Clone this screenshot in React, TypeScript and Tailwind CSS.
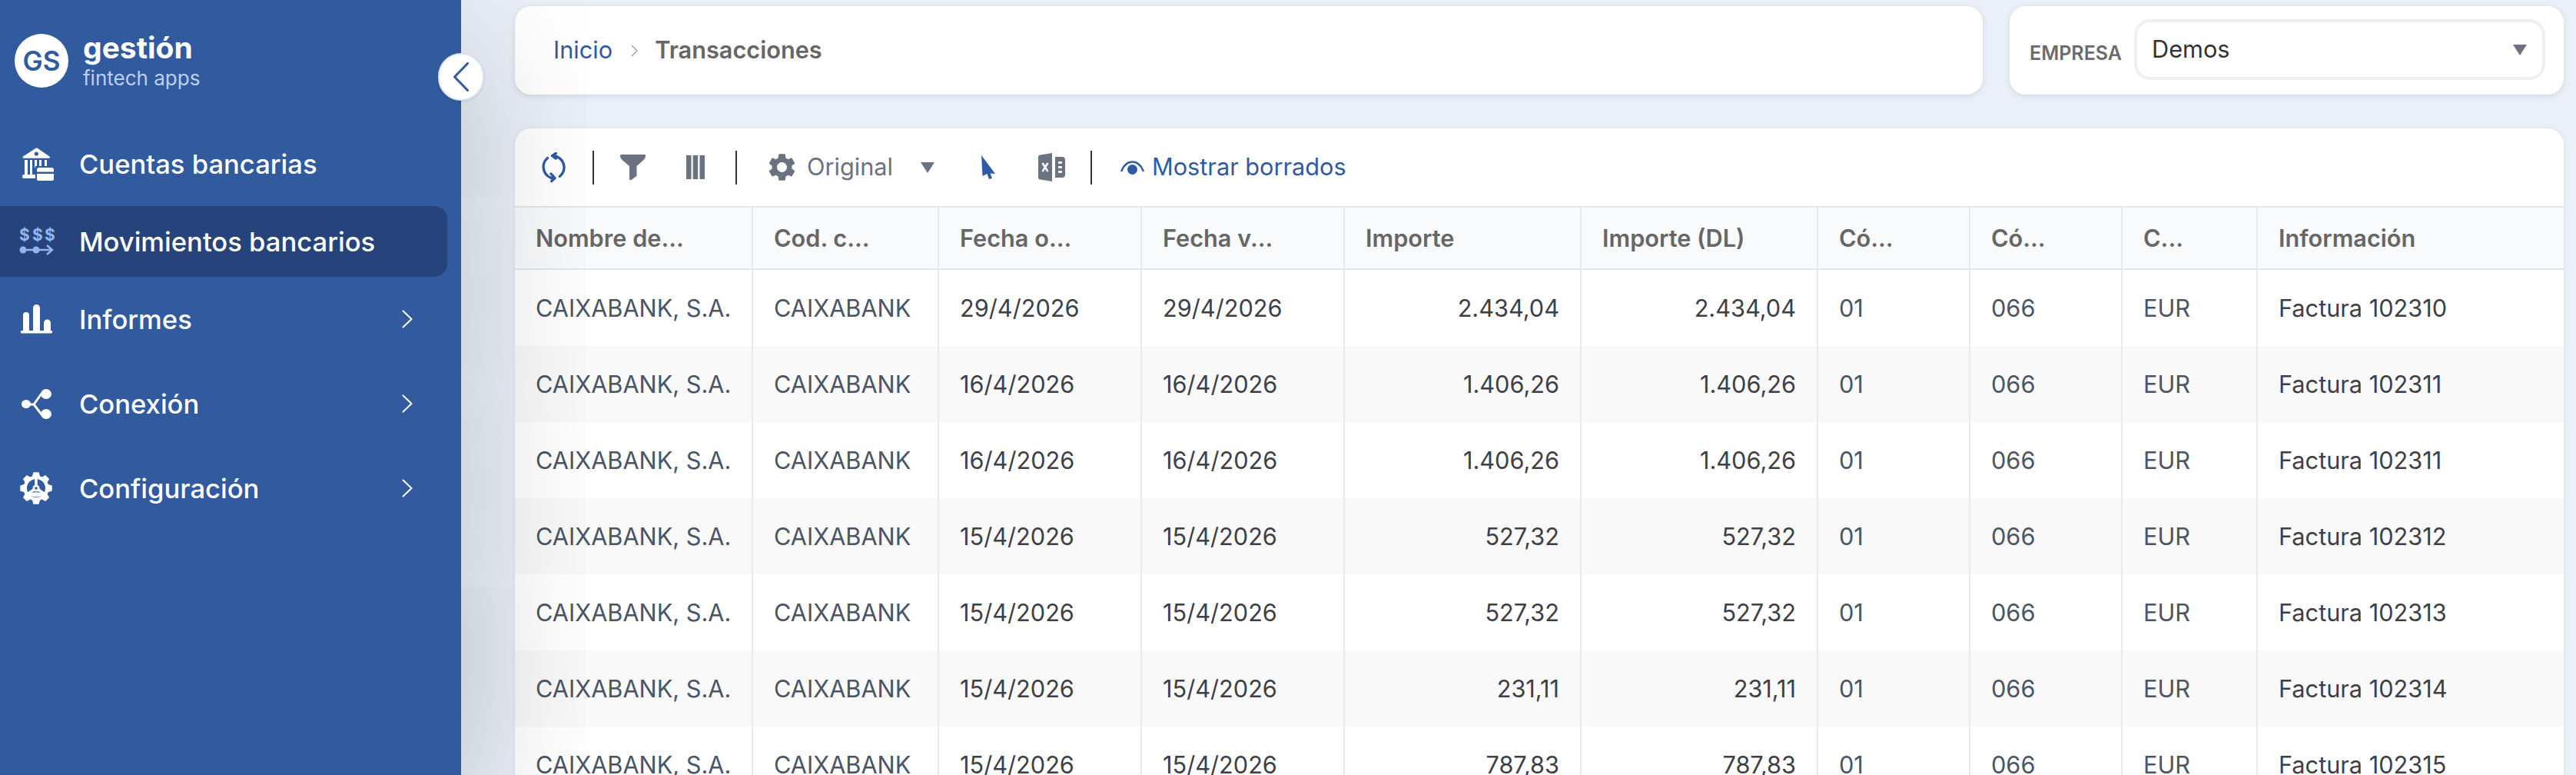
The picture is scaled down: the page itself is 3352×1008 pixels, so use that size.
import { MdSettings } from 'react-icons/md';

interface Movimiento {
  fecha: string;
  importe: string;
  factura: string;
}

const MOVIMIENTOS: Movimiento[] = [
  { fecha: '29/4/2026', importe: '2.434,04', factura: '102310' },
  { fecha: '16/4/2026', importe: '1.406,26', factura: '102311' },
  { fecha: '16/4/2026', importe: '1.406,26', factura: '102311' },
  { fecha: '15/4/2026', importe: '527,32', factura: '102312' },
  { fecha: '15/4/2026', importe: '527,32', factura: '102313' },
  { fecha: '15/4/2026', importe: '231,11', factura: '102314' },
  { fecha: '15/4/2026', importe: '787,83', factura: '102315' },
];

const GRID = 'grid grid-cols-[310px_242px_264px_264px_308px_308px_198px_198px_176px_1fr]';
const CELL = 'flex items-center px-[27px] pt-[2px] border-r-2 border-[#e9eaec] last:border-r-0 whitespace-nowrap';

// 8 teeth gear outline for the Configuración icon
const gearPoints = () => {
  const pts: string[] = [];
  for (let i = 0; i < 8; i++) {
    const a = (i * Math.PI) / 4 - Math.PI / 2;
    [
      [-0.3, 16.5],
      [-0.17, 21],
      [0.17, 21],
      [0.3, 16.5],
    ].forEach(([d, r]) => {
      pts.push(`${(21 + r * Math.cos(a + d)).toFixed(1)},${(22 + r * Math.sin(a + d)).toFixed(1)}`);
    });
  }
  return pts.join(' ');
};

const BankIcon = () => (
  <svg className="ml-[4px]" width="41" height="43" viewBox="0 0 41 43" fill="#fff">
    <path d="M18 .6 1 11.500c-1 .7-.6 2.300.7 2.300h33c1.300 0 1.700-1.600.7-2.300L19.400.6a1.300 1.300 0 0 0-1.400 0Z" />
    <circle cx="18.400" cy="8" r="2.600" fill="#315a9f" />
    <path d="M3 16h4v19H3zM10 16h3v19h-3zM16 16h3v10h-3zM22 16h3v10h-3zM29 16h3v8h-3z" />
    <path d="M2 35h17v5H2a2 2 0 0 1-2-2v-1a2 2 0 0 1 2-2Z" />
    <rect x="17" y="24" width="24" height="19" fill="#315a9f" />
    <path d="M19 31.500V29a3 3 0 0 1 3-3h16a3 3 0 0 1 3 3v2.500zM19 34h22v7a2 2 0 0 1-2 2H21a2 2 0 0 1-2-2z" />
  </svg>
);

const TransferIcon = () => (
  <svg className="overflow-visible" width="45" height="36" viewBox="0 0 45 36" fill="#93b5ee">
    <text x="0" y="17" fontSize="21" fontWeight="700" fontFamily="Inter, sans-serif">$</text>
    <text x="17" y="17" fontSize="21" fontWeight="700" fontFamily="Inter, sans-serif">$</text>
    <text x="33" y="17" fontSize="21" fontWeight="700" fontFamily="Inter, sans-serif">$</text>
    <circle cx="5" cy="29" r="4.500" />
    <circle cx="22" cy="29" r="4.500" />
    <path d="M5 29h38M36 23l7 6-7 6" fill="none" stroke="#93b5ee" strokeWidth="2.500" />
  </svg>
);

const BarsIcon = () => (
  <svg className="ml-[2px]" width="41" height="38" viewBox="0 0 41 38" fill="#fff">
    <path d="M3 14a4 4 0 0 1 8 0v20H3zM16 4.500a4.500 4.500 0 0 1 9 0V34h-9zM30 24a4.500 4.500 0 0 1 9 0v10h-9z" />
    <rect x="0" y="34" width="41" height="3.500" rx="1" />
  </svg>
);

const ShareIcon = () => (
  <svg className="ml-[3px]" width="39" height="39" viewBox="0 0 39 39" fill="#fff">
    <path d="M7 20h9l10-14M16 20l10 13" fill="none" stroke="#fff" strokeWidth="3" />
    <ellipse cx="6" cy="19.500" rx="6" ry="5.500" />
    <ellipse cx="32" cy="6.500" rx="7" ry="6.500" />
    <ellipse cx="32" cy="32.500" rx="7" ry="6.500" />
  </svg>
);

const ConfigIcon = () => (
  <svg className="ml-[1px]" width="42" height="44" viewBox="0 0 42 44">
    <polygon points={gearPoints()} fill="#fff" />
    <circle cx="21" cy="22" r="12" fill="#315a9f" />
    <path d="M21 22V9M21 22 10.500 29M21 22l10.500 7" stroke="#fff" strokeWidth="3.500" fill="none" />
    <path d="M10.500 29.500C14 26.500 28 26.500 31.500 29.500 28 34.500 14 34.500 10.500 29.500Z" fill="#fff" />
    <circle cx="21" cy="22" r="4.500" fill="#fff" />
    <circle cx="21" cy="22" r="1.800" fill="#315a9f" />
  </svg>
);

const RefreshIcon = () => (
  <svg width="33" height="40" viewBox="0 0 33 40" fill="none" stroke="#2f5aa5" strokeWidth="3.400" strokeLinecap="round" strokeLinejoin="round">
    <path d="M16 4.700A15 15 0 0 1 24.300 31.500" />
    <path d="M17 34A15 15 0 0 1 8.500 7.500" />
    <path d="M19.300 1.500 14.500 4.700 19.300 8" />
    <path d="M13 28 18 33.700 13.700 37.500" />
  </svg>
);

const FilterIcon = () => (
  <svg width="33" height="33" viewBox="0 0 33 33" fill="#6b7280">
    <path d="M1.500 0h30c1.200 0 1.800 1 1.500 2.500-.5 2-1.500 3.500-3 5L21.500 15v13l-7 5c-.7.300-2.500.3-2.500-1V15L3 7.500C1.500 6 .5 4.500 0 2.500-.3 1 .3 0 1.500 0Z" />
  </svg>
);

const ColumnsIcon = () => (
  <svg width="24" height="31" viewBox="0 0 24 31" fill="#6b7280">
    <rect x="0" y="0" width="6.500" height="31" />
    <rect x="8.700" y="0" width="6.500" height="31" />
    <rect x="17.500" y="0" width="6.500" height="31" />
  </svg>
);

const CursorIcon = () => (
  <svg width="18" height="31" viewBox="0 0 18 31" fill="#2f5aa5">
    <path d="M0 0 18 24l-6.500-.5L14 30l-4 1-2.500-7L1.500 27Z" />
  </svg>
);

const ExcelIcon = () => (
  <svg width="35" height="37" viewBox="0 0 35 37" fill="#6b7280">
    <path d="M18 0v37L3 34.500A3 3 0 0 1 0 31.500V5.500a3 3 0 0 1 3-3Z" />
    <path d="M5.500 13l7 11M12.500 13l-7 11" stroke="#fff" strokeWidth="2.500" fill="none" />
    <path d="M22 5h9a4 4 0 0 1 4 4v19a4 4 0 0 1-4 4h-9Z" />
    <rect x="26" y="11" width="5" height="3" rx="1" fill="#fff" />
    <rect x="26" y="17" width="5" height="3" rx="1" fill="#fff" />
    <rect x="26" y="23" width="5" height="3" rx="1" fill="#fff" />
  </svg>
);

const EyeIcon = () => (
  <svg width="31" height="18" viewBox="0 0 31 18" fill="none">
    <path d="M1.500 13C5 4 10 1.500 15.500 1.500S26 4 29.500 13" stroke="#2f5aa5" strokeWidth="2.500" strokeLinecap="round" />
    <ellipse cx="15.500" cy="11.500" rx="6.500" ry="6.500" fill="#2f5aa5" />
  </svg>
);

const Caret = () => (
  <svg width="18" height="14" viewBox="0 0 18 14" fill="#6b7280">
    <path d="M0 0h18L9 14Z" />
  </svg>
);

const NavChevron = () => (
  <svg width="14" height="24" viewBox="0 0 14 24" fill="none" stroke="#fff" strokeWidth="2" strokeLinecap="round" strokeLinejoin="round">
    <path d="M1.500 1.500 12.500 12 1.500 22.500" />
  </svg>
);

function NavItem({ icon, label, active, arrow }: { icon: React.ReactNode; label: string; active?: boolean; arrow?: boolean }) {
  return (
    <div
      className={`flex items-center h-[92px] w-[582px] pl-[25px] pr-[45px] rounded-r-[17px] ${arrow ? 'mb-[18px]' : 'mb-[9px]'} ${
        active ? 'bg-[#26447b]' : ''
      }`}
    >
      <span className="w-[78px] shrink-0 flex items-center">{icon}</span>
      <span className="flex-1 pt-[2px] text-[34.600px] text-white font-medium">{label}</span>
      {arrow && <NavChevron />}
    </div>
  );
}

export default function App() {
  return (
    <div className="flex h-screen w-full overflow-hidden bg-[#ebf0f8] font-[Inter,sans-serif]">
      {/* Sidebar */}
      <aside className="relative z-10 w-[600px] shrink-0 bg-[#315a9f] pt-[44px] shadow-[0_60px_210px_-5px_rgba(0,0,0,0.25)]">
        <div className="flex items-center pl-[19px] h-[70px]">
          <div className="w-[70px] h-[70px] rounded-full bg-white flex items-center justify-center text-[#315a9f] text-[35px] font-semibold">
            GS
          </div>
          <div className="ml-[19px] flex flex-col">
            <span className="text-[39px] leading-[46px] font-bold text-white">gestión</span>
            <span className="text-[26px] leading-[34px] text-[#bcd0f3]">fintech apps</span>
          </div>
        </div>

        <button className="absolute top-[69px] left-[570px] w-[60px] h-[62px] rounded-full bg-white border-2 border-[#dbe4f3] shadow-sm flex items-center justify-center">
          <svg width="20" height="38" viewBox="0 0 20 38" fill="none" stroke="#315a9f" strokeWidth="3" strokeLinecap="round" strokeLinejoin="round">
            <path d="M18.500 1.500 1.500 19l17 17.500" />
          </svg>
        </button>

        <nav className="mt-[53px]">
          <NavItem icon={<BankIcon />} label="Cuentas bancarias" />
          <NavItem icon={<TransferIcon />} label="Movimientos bancarios" active />
          <NavItem icon={<BarsIcon />} label="Informes" arrow />
          <NavItem icon={<ShareIcon />} label="Conexión" arrow />
          <NavItem icon={<ConfigIcon />} label="Configuración" arrow />
        </nav>
      </aside>

      {/* Content */}
      <main className="flex-1 min-w-0 pl-[70px] pr-[16px] pt-[8px]">
        <div className="flex gap-[35px] h-[115px]">
          <div className="flex-1 flex items-center pl-[50px] bg-white rounded-[21px] shadow-[0_2px_8px_rgba(15,30,60,0.12)] text-[30.700px]">
            <span className="text-[#2f5aa5]">Inicio</span>
            <svg className="ml-[24px] mr-[22px]" width="9" height="16" viewBox="0 0 9 16" fill="none" stroke="#9ca3af" strokeWidth="1.500">
              <path d="M1 1l7 7-7 7" />
            </svg>
            <span className="text-[#666] font-semibold">Transacciones</span>
          </div>
          <div className="w-[721px] flex items-center justify-between pl-[26px] pr-[24px] bg-white rounded-[21px] shadow-[0_2px_8px_rgba(15,30,60,0.12)]">
            <span className="text-[25px] font-semibold text-[#6b6b6b] mt-[8px]">EMPRESA</span>
            <div className="w-[535px] h-[79px] mb-[2px] flex items-center justify-between pl-[19px] pr-[20px] border-[4px] border-[#eeeff1] rounded-[21px] text-[30.700px] text-[#333]">
              Demos
              <Caret />
            </div>
          </div>
        </div>

        <div className="mt-[44px] bg-white rounded-t-[21px] shadow-[0_0_6px_rgba(15,30,60,0.08)] overflow-hidden">
          {/* Toolbar */}
          <div className="flex items-center h-[101px] pl-[34px] text-[30.700px]">
            <RefreshIcon />
            <span className="w-[2px] h-[44px] bg-[#333] mx-[34px]" />
            <FilterIcon />
            <span className="ml-[53px]"><ColumnsIcon /></span>
            <span className="w-[2px] h-[44px] bg-[#333] ml-[40px] mr-[37px]" />
            <MdSettings className="w-[43px] h-[43px] text-[#6b7280]" />
            <span className="ml-[11px] w-[148px] text-[#6b7280]">Original</span>
            <Caret />
            <span className="ml-[61px]"><CursorIcon /></span>
            <span className="ml-[56px]"><ExcelIcon /></span>
            <span className="w-[2px] h-[44px] bg-[#333] ml-[33px] mr-[37px]" />
            <EyeIcon />
            <span className="ml-[10px] text-[#2f5aa5]">Mostrar borrados</span>
          </div>

          {/* Table header */}
          <div className={`${GRID} h-[83px] bg-[#f9fafb] border-y-2 border-[#e5e7eb] text-[30.700px] font-semibold text-[#666]`}>
            {['Nombre de...', 'Cod. c...', 'Fecha o...', 'Fecha v...', 'Importe', 'Importe (DL)', 'Có...', 'Có...', 'C...', 'Información'].map((title, i) => (
              <div key={i} className={CELL}>{title}</div>
            ))}
          </div>

          {/* Rows */}
          {MOVIMIENTOS.map((m, i) => (
            <div key={i} className={`${GRID} h-[99px] text-[30.700px] ${i % 2 === 1 ? 'bg-[#f9f9f9]' : 'bg-white'}`}>
              <div className={`${CELL} text-[#4b5563]`}>CAIXABANK, S.A.</div>
              <div className={`${CELL} text-[#4b5563]`}>CAIXABANK</div>
              <div className={`${CELL} text-[#3f3f46]`}>{m.fecha}</div>
              <div className={`${CELL} text-[#3f3f46]`}>{m.fecha}</div>
              <div className={`${CELL} justify-end text-[#3f3f46]`}>{m.importe}</div>
              <div className={`${CELL} justify-end text-[#3f3f46]`}>{m.importe}</div>
              <div className={`${CELL} text-[#4b5563]`}>01</div>
              <div className={`${CELL} text-[#4b5563]`}>066</div>
              <div className={`${CELL} text-[#4b5563]`}>EUR</div>
              <div className={`${CELL} text-[#3f3f46]`}>Factura {m.factura}</div>
            </div>
          ))}
        </div>
      </main>
    </div>
  );
}
